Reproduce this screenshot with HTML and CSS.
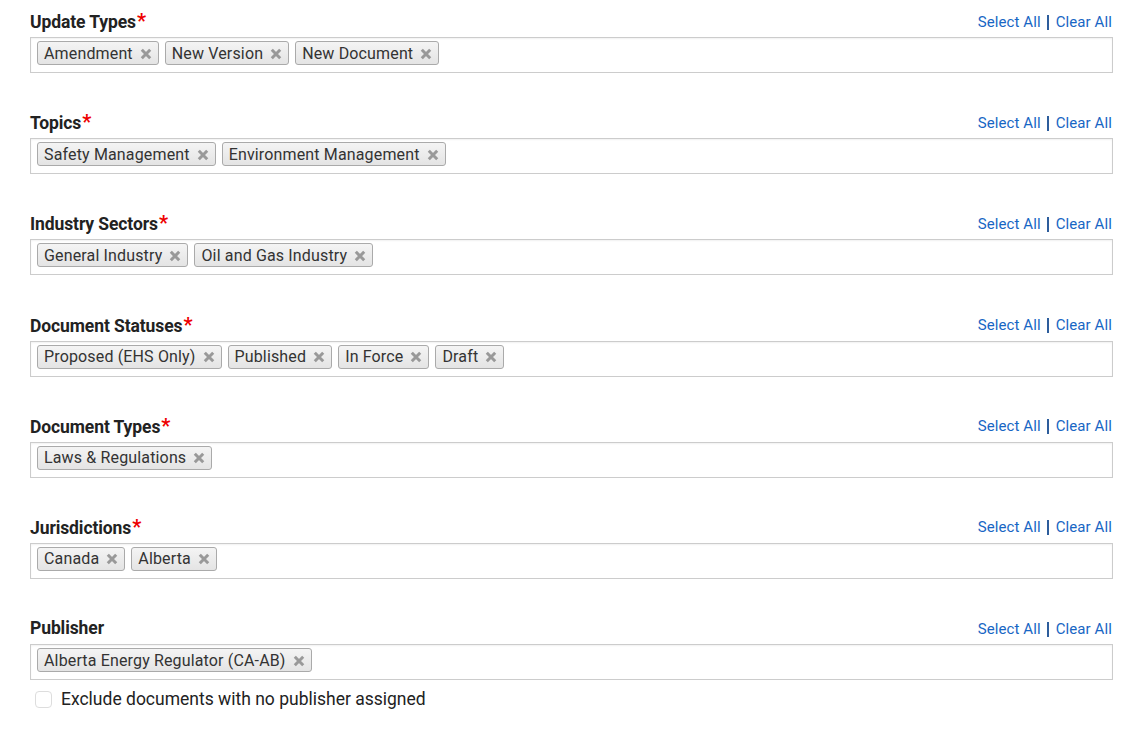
FILE: index.html
```html
<!DOCTYPE html>
<html lang="en">
<head>
    <meta charset="UTF-8">
    <meta name="viewport" content="width=device-width, initial-scale=1.0">
    <title>Filters</title>
    <link rel="stylesheet" href="styles.css">
</head>
<body>
    <main class="filters">
        <div class="field">
            <div class="field-head">
                <label>Update Types<span class="req">*</span></label>
                <div class="bulk"><a href="#">Select All</a><span class="sep"></span><a href="#">Clear All</a></div>
            </div>
            <div class="choices">
                <span class="tag">Amendment<svg class="x" viewBox="0 0 10 10"><path d="M1.5 1.5L8.5 8.5M8.5 1.5L1.5 8.5"/></svg></span>
                <span class="tag">New Version<svg class="x" viewBox="0 0 10 10"><path d="M1.5 1.5L8.5 8.5M8.5 1.5L1.5 8.5"/></svg></span>
                <span class="tag">New Document<svg class="x" viewBox="0 0 10 10"><path d="M1.5 1.5L8.5 8.5M8.5 1.5L1.5 8.5"/></svg></span>
            </div>
        </div>

        <div class="field">
            <div class="field-head">
                <label>Topics<span class="req">*</span></label>
                <div class="bulk"><a href="#">Select All</a><span class="sep"></span><a href="#">Clear All</a></div>
            </div>
            <div class="choices">
                <span class="tag">Safety Management<svg class="x" viewBox="0 0 10 10"><path d="M1.5 1.5L8.5 8.5M8.5 1.5L1.5 8.5"/></svg></span>
                <span class="tag">Environment Management<svg class="x" viewBox="0 0 10 10"><path d="M1.5 1.5L8.5 8.5M8.5 1.5L1.5 8.5"/></svg></span>
            </div>
        </div>

        <div class="field">
            <div class="field-head">
                <label>Industry Sectors<span class="req">*</span></label>
                <div class="bulk"><a href="#">Select All</a><span class="sep"></span><a href="#">Clear All</a></div>
            </div>
            <div class="choices">
                <span class="tag">General Industry<svg class="x" viewBox="0 0 10 10"><path d="M1.5 1.5L8.5 8.5M8.5 1.5L1.5 8.5"/></svg></span>
                <span class="tag">Oil and Gas Industry<svg class="x" viewBox="0 0 10 10"><path d="M1.5 1.5L8.5 8.5M8.5 1.5L1.5 8.5"/></svg></span>
            </div>
        </div>

        <div class="field">
            <div class="field-head">
                <label>Document Statuses<span class="req">*</span></label>
                <div class="bulk"><a href="#">Select All</a><span class="sep"></span><a href="#">Clear All</a></div>
            </div>
            <div class="choices">
                <span class="tag">Proposed (EHS Only)<svg class="x" viewBox="0 0 10 10"><path d="M1.5 1.5L8.5 8.5M8.5 1.5L1.5 8.5"/></svg></span>
                <span class="tag">Published<svg class="x" viewBox="0 0 10 10"><path d="M1.5 1.5L8.5 8.5M8.5 1.5L1.5 8.5"/></svg></span>
                <span class="tag">In Force<svg class="x" viewBox="0 0 10 10"><path d="M1.5 1.5L8.5 8.5M8.5 1.5L1.5 8.5"/></svg></span>
                <span class="tag">Draft<svg class="x" viewBox="0 0 10 10"><path d="M1.5 1.5L8.5 8.5M8.5 1.5L1.5 8.5"/></svg></span>
            </div>
        </div>

        <div class="field">
            <div class="field-head">
                <label>Document Types<span class="req">*</span></label>
                <div class="bulk"><a href="#">Select All</a><span class="sep"></span><a href="#">Clear All</a></div>
            </div>
            <div class="choices">
                <span class="tag">Laws &amp; Regulations<svg class="x" viewBox="0 0 10 10"><path d="M1.5 1.5L8.5 8.5M8.5 1.5L1.5 8.5"/></svg></span>
            </div>
        </div>

        <div class="field">
            <div class="field-head">
                <label>Jurisdictions<span class="req">*</span></label>
                <div class="bulk"><a href="#">Select All</a><span class="sep"></span><a href="#">Clear All</a></div>
            </div>
            <div class="choices">
                <span class="tag">Canada<svg class="x" viewBox="0 0 10 10"><path d="M1.5 1.5L8.5 8.5M8.5 1.5L1.5 8.5"/></svg></span>
                <span class="tag">Alberta<svg class="x" viewBox="0 0 10 10"><path d="M1.5 1.5L8.5 8.5M8.5 1.5L1.5 8.5"/></svg></span>
            </div>
        </div>

        <div class="field">
            <div class="field-head">
                <label>Publisher</label>
                <div class="bulk"><a href="#">Select All</a><span class="sep"></span><a href="#">Clear All</a></div>
            </div>
            <div class="choices">
                <span class="tag">Alberta Energy Regulator (CA-AB)<svg class="x" viewBox="0 0 10 10"><path d="M1.5 1.5L8.5 8.5M8.5 1.5L1.5 8.5"/></svg></span>
            </div>
            <label class="check">
                <input type="checkbox">
                <span class="box"></span>
                Exclude documents with no publisher assigned
            </label>
        </div>
    </main>
</body>
</html>
```

FILE: styles.css
```css
body {
    margin: 0;
    padding: 0;
    background-color: #ffffff;
    font-family: Roboto, 'Liberation Sans', Arial, sans-serif;
    color: #333333;
}
.filters {
    padding: 9px 24px 0 30px;
}
.field {
    margin-bottom: 37.2px;
}
.field-head {
    display: flex;
    justify-content: space-between;
    align-items: center;
    height: 24px;
    margin-bottom: 4px;
}
.field-head label {
    font-size: 17.5px;
    font-weight: bold;
    color: #222222;
    letter-spacing: -0.1px;
}
.req {
    color: #ee0000;
    margin-left: 1px;
    font-size: 20px;
}
.bulk {
    display: flex;
    align-items: center;
    font-size: 15px;
    padding-right: 1px;
    margin-top: 1px;
}
.bulk a {
    color: #1866c4;
    text-decoration: none;
    letter-spacing: 0.1px;
}
.bulk .sep {
    display: inline-block;
    width: 2px;
    height: 15px;
    background-color: #2d5d9c;
    margin: 1px 7px 0 6px;
}
.choices {
    border: 1px solid #cccccc;
    padding: 3px 6px 0;
    box-sizing: border-box;
    height: 36px;
    display: flex;
    gap: 6px;
    box-shadow: inset 0 1px 2px rgba(0, 0, 0, 0.06);
}
.tag {
    display: inline-flex;
    align-items: center;
    height: 24px;
    box-sizing: border-box;
    padding: 0 6px 0 6px;
    border: 1px solid #aaaaaa;
    border-radius: 3px;
    background: linear-gradient(#f4f4f4, #e4e4e4);
    font-size: 16px;
    letter-spacing: 0.15px;
    color: #333333;
}
.tag .x {
    width: 12px;
    height: 12px;
    margin-left: 7px;
    margin-top: 1px;
    fill: none;
    stroke: #999999;
    stroke-width: 2.5;
}
.check {
    display: flex;
    align-items: center;
    margin-top: 9px;
    margin-left: 5px;
    font-size: 17.5px;
    color: #222222;
}
.check input {
    display: none;
}
.check .box {
    width: 15px;
    height: 15px;
    border: 1px solid #dddddd;
    border-radius: 4px;
    margin-right: 9px;
}
```
